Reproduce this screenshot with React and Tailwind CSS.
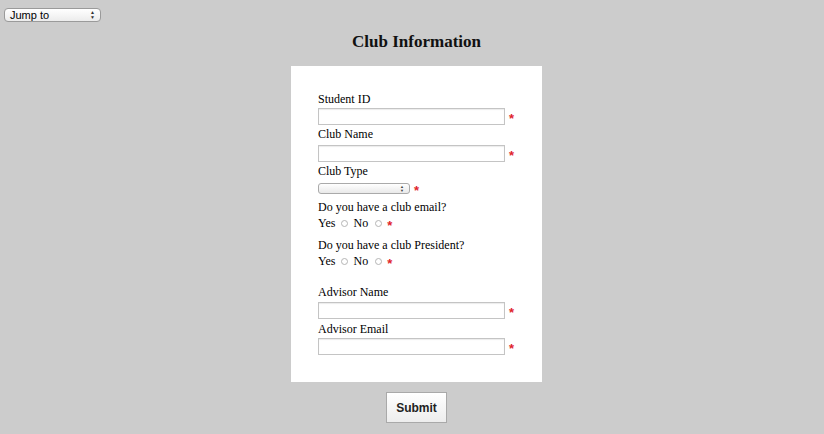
import React from 'react';

const Req = () => (
  <span className="ml-[4px] text-[13px] font-bold leading-none text-[#e0242b] translate-y-[2px]" style={{ fontFamily: '"Liberation Sans", sans-serif' }}>*</span>
);

const TextField = ({ className = '' }) => (
  <div className={`flex items-center ${className}`}>
    <input type="text" className="w-[187px] h-[17px] bg-white border border-[#c4c4c4] shadow-[inset_0_1px_1px_rgba(0,0,0,0.08)] outline-none" />
    <Req />
  </div>
);

const Radio = () => (
  <span className="inline-block w-[7px] h-[7px] rounded-full border border-[#b5b5b5] bg-white" />
);

const YesNo = () => (
  <div className="flex items-center h-[16px]">
    <span>Yes</span>
    <span className="ml-[6px] mr-[5px] flex"><Radio /></span>
    <span>No</span>
    <span className="ml-[7px] flex"><Radio /></span>
    <span className="ml-[1px] flex"><Req /></span>
  </div>
);

const App = () => {
  return (
    <div className="min-h-screen bg-[#cccccc] text-black" style={{ fontFamily: '"Liberation Serif", serif' }}>
      {/* Jump to */}
      <div className="pt-[8px] pl-[4px]">
        <div className="w-[97px] h-[14px] rounded-[4px] border border-[#9a9a9a] bg-gradient-to-b from-white to-[#ececec] flex items-center justify-between px-[5px] text-[11px] leading-none text-black" style={{ fontFamily: '"Liberation Sans", sans-serif' }}>
          <span>Jump to</span>
          <span className="flex flex-col text-[5px] leading-[5px] text-[#333]">
            <span>▲</span>
            <span>▼</span>
          </span>
        </div>
      </div>

      <div className="flex flex-col items-center pl-[9px]">
        <h2 className="mt-[10px] h-[20px] text-[17px] leading-[20px] font-bold text-[#111]">Club Information</h2>

        {/* Card */}
        <div className="mt-[14px] w-[251px] bg-white pt-[25px] pb-[27px] pl-[27px] text-[12px] leading-[16px]">
          <div className="h-[16px]">Student ID</div>
          <TextField className="mt-[1px]" />

          <div className="mt-[1px] h-[16px]">Club Name</div>
          <TextField className="mt-[3px]" />

          <div className="mt-[1px] h-[16px]">Club Type</div>
          <div className="mt-[3px] flex items-center">
            <div className="w-[92px] h-[11px] rounded-[3px] border border-[#aaa] bg-gradient-to-b from-white to-[#e9e9e9] flex items-center justify-end pr-[5px]">
              <span className="flex flex-col text-[4px] leading-[4px] text-[#444]">
                <span>▲</span>
                <span>▼</span>
              </span>
            </div>
            <Req />
          </div>

          <div className="mt-[4px] h-[16px]">Do you have a club email?</div>
          <YesNo />

          <div className="mt-[6px] h-[16px]">Do you have a club President?</div>
          <YesNo />

          <div className="mt-[15px] h-[16px]">Advisor Name</div>
          <TextField className="mt-[2px]" />

          <div className="mt-[2px] h-[16px]">Advisor Email</div>
          <TextField className="mt-[1px]" />
        </div>

        <button className="mt-[10px] w-[61px] h-[31px] border border-[#a9a9a9] bg-gradient-to-b from-white to-[#ededed] text-[12px] font-bold text-[#222]" style={{ fontFamily: '"Liberation Sans", sans-serif' }}>
          Submit
        </button>
      </div>
    </div>
  );
};

export default App;
